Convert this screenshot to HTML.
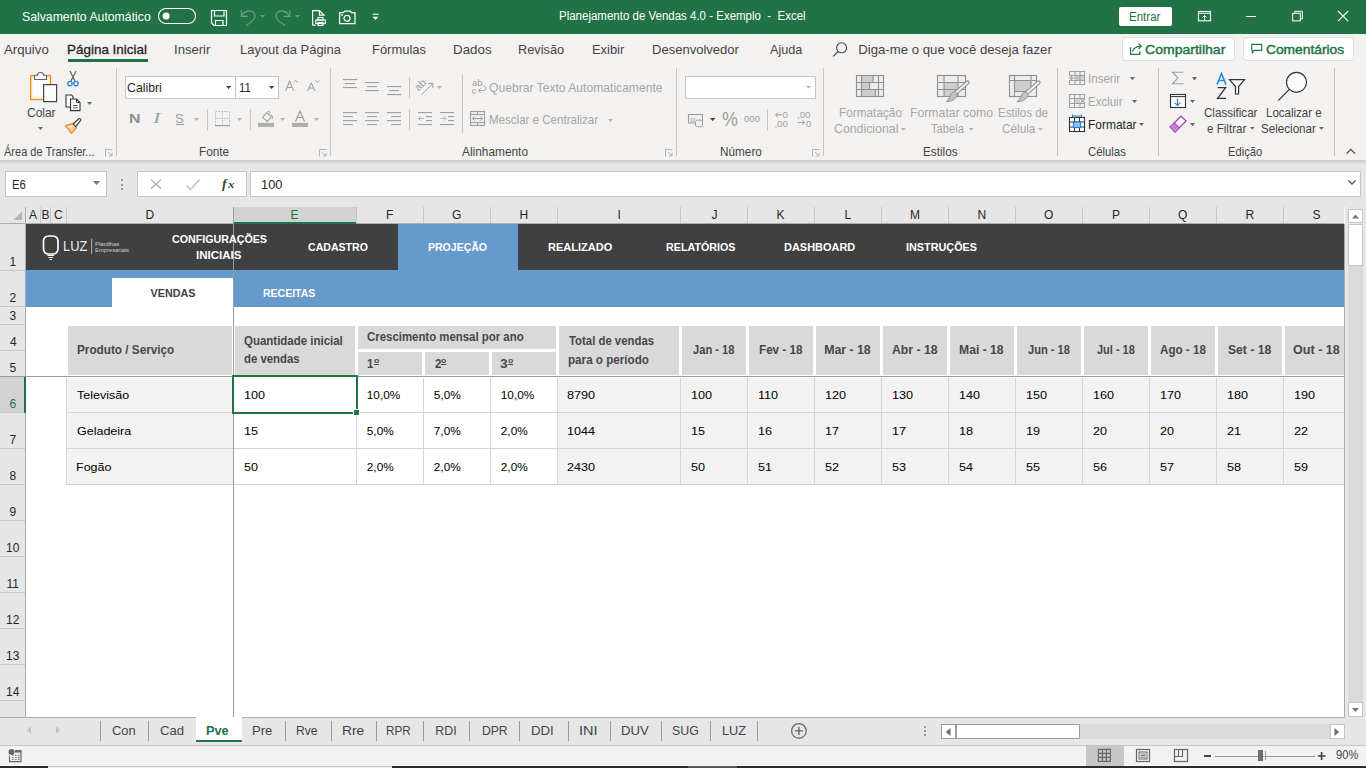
<!DOCTYPE html>
<html><head><meta charset="utf-8"><title>Excel</title><style>
*{margin:0;padding:0;box-sizing:border-box}
html,body{width:1366px;height:768px;overflow:hidden;background:#fff;position:relative}
.a{position:absolute}
.t{white-space:pre;line-height:1;transform-origin:0 0}
</style></head><body>
<div class="a" style="left:0px;top:0px;width:1366px;height:34px;background:#217346;"></div>
<div class="a" style="left:0px;top:34px;width:1366px;height:126px;background:#f3f2f1;"></div>
<div class="a" style="left:0px;top:160px;width:1366px;height:5px;background:linear-gradient(#cbc9c7,#e3e3e3 75%,#e6e6e6);"></div>
<div class="a" style="left:0px;top:165px;width:1366px;height:42px;background:#e6e6e6;"></div>
<div class="a" style="left:0px;top:207px;width:1344px;height:17px;background:#e6e6e6;"></div>
<div class="a" style="left:26px;top:224px;width:1318px;height:493px;background:#fff;"></div>
<div class="a" style="left:0px;top:224px;width:25px;height:493px;background:#e6e6e6;"></div>
<div class="a" style="left:25px;top:207px;width:1px;height:510px;background:#ababab;"></div>
<div class="a" style="left:0px;top:223px;width:1344px;height:1px;background:#ababab;"></div>
<div class="a" style="left:1344px;top:224px;width:1px;height:494px;background:#ababab;"></div>
<div class="a" style="left:0px;top:717px;width:1345px;height:1px;background:#ababab;"></div>
<div class="a" style="left:1345px;top:207px;width:21px;height:511px;background:#e6e6e6;"></div>
<div class="a" style="left:0px;top:718px;width:1366px;height:27px;background:#e6e6e6;"></div>
<div class="a" style="left:0px;top:745px;width:1366px;height:1px;background:#c8c6c4;"></div>
<div class="a" style="left:0px;top:746px;width:1366px;height:20px;background:#f3f2f1;"></div>
<div class="a" style="left:0px;top:766px;width:1366px;height:2px;background:#2b2b2b;"></div>
<svg class="a" style="left:13px;top:211px;" width="10" height="10" viewBox="0 0 10 10"><path d="M9,0.5 V9 H0.5 Z" fill="#b4b4b4"/></svg>
<div class="a" style="left:234px;top:207px;width:122px;height:15px;background:#d2d2d2;"></div>
<div class="a" style="left:234px;top:222px;width:122px;height:2px;background:#217346;"></div>
<div class="a" style="left:40px;top:207px;width:1px;height:16px;background:#c6c6c6;"></div>
<div class="a" style="left:50px;top:207px;width:1px;height:16px;background:#c6c6c6;"></div>
<div class="a" style="left:66px;top:207px;width:1px;height:16px;background:#c6c6c6;"></div>
<div class="a" style="left:233px;top:207px;width:1px;height:16px;background:#c6c6c6;"></div>
<div class="a" style="left:356px;top:207px;width:1px;height:16px;background:#c6c6c6;"></div>
<div class="a" style="left:423px;top:207px;width:1px;height:16px;background:#c6c6c6;"></div>
<div class="a" style="left:490px;top:207px;width:1px;height:16px;background:#c6c6c6;"></div>
<div class="a" style="left:557px;top:207px;width:1px;height:16px;background:#c6c6c6;"></div>
<div class="a" style="left:680px;top:207px;width:1px;height:16px;background:#c6c6c6;"></div>
<div class="a" style="left:747px;top:207px;width:1px;height:16px;background:#c6c6c6;"></div>
<div class="a" style="left:814px;top:207px;width:1px;height:16px;background:#c6c6c6;"></div>
<div class="a" style="left:881px;top:207px;width:1px;height:16px;background:#c6c6c6;"></div>
<div class="a" style="left:948px;top:207px;width:1px;height:16px;background:#c6c6c6;"></div>
<div class="a" style="left:1015px;top:207px;width:1px;height:16px;background:#c6c6c6;"></div>
<div class="a" style="left:1082px;top:207px;width:1px;height:16px;background:#c6c6c6;"></div>
<div class="a" style="left:1149px;top:207px;width:1px;height:16px;background:#c6c6c6;"></div>
<div class="a" style="left:1216px;top:207px;width:1px;height:16px;background:#c6c6c6;"></div>
<div class="a" style="left:1283px;top:207px;width:1px;height:16px;background:#c6c6c6;"></div>
<div class="a" style="left:0px;top:270px;width:25px;height:1px;background:#c6c6c6;"></div>
<div class="a" style="left:0px;top:306px;width:25px;height:1px;background:#c6c6c6;"></div>
<div class="a" style="left:0px;top:324px;width:25px;height:1px;background:#c6c6c6;"></div>
<div class="a" style="left:0px;top:350px;width:25px;height:1px;background:#c6c6c6;"></div>
<div class="a" style="left:0px;top:376px;width:25px;height:1px;background:#c6c6c6;"></div>
<div class="a" style="left:0px;top:412px;width:25px;height:1px;background:#c6c6c6;"></div>
<div class="a" style="left:0px;top:448px;width:25px;height:1px;background:#c6c6c6;"></div>
<div class="a" style="left:0px;top:484px;width:25px;height:1px;background:#c6c6c6;"></div>
<div class="a" style="left:0px;top:520px;width:25px;height:1px;background:#c6c6c6;"></div>
<div class="a" style="left:0px;top:556px;width:25px;height:1px;background:#c6c6c6;"></div>
<div class="a" style="left:0px;top:592px;width:25px;height:1px;background:#c6c6c6;"></div>
<div class="a" style="left:0px;top:628px;width:25px;height:1px;background:#c6c6c6;"></div>
<div class="a" style="left:0px;top:664px;width:25px;height:1px;background:#c6c6c6;"></div>
<div class="a" style="left:0px;top:700px;width:25px;height:1px;background:#c6c6c6;"></div>
<div class="a" style="left:0px;top:377px;width:24px;height:35px;background:#d2d2d2;"></div>
<div class="a" style="left:24px;top:376px;width:2px;height:37px;background:#217346;"></div>
<div class="a" style="left:26px;top:224px;width:372px;height:46px;background:#404040;"></div>
<div class="a" style="left:398px;top:224px;width:120px;height:46px;background:#6699cc;"></div>
<div class="a" style="left:518px;top:224px;width:826px;height:46px;background:#404040;"></div>
<div class="a" style="left:26px;top:270px;width:1318px;height:37px;background:#6699cc;"></div>
<div class="a" style="left:112px;top:278px;width:121px;height:29px;background:#fff;"></div>
<div class="a" style="left:68px;top:326px;width:164px;height:49px;background:#d9d9d9;"></div>
<div class="a" style="left:235px;top:326px;width:120px;height:49px;background:#d9d9d9;"></div>
<div class="a" style="left:358px;top:326px;width:198px;height:23px;background:#d9d9d9;"></div>
<div class="a" style="left:358px;top:352px;width:64px;height:23px;background:#d9d9d9;"></div>
<div class="a" style="left:425px;top:352px;width:64px;height:23px;background:#d9d9d9;"></div>
<div class="a" style="left:492px;top:352px;width:64px;height:23px;background:#d9d9d9;"></div>
<div class="a" style="left:559px;top:326px;width:120px;height:49px;background:#d9d9d9;"></div>
<div class="a" style="left:682px;top:326px;width:64px;height:49px;background:#d9d9d9;"></div>
<div class="a" style="left:749px;top:326px;width:64px;height:49px;background:#d9d9d9;"></div>
<div class="a" style="left:816px;top:326px;width:64px;height:49px;background:#d9d9d9;"></div>
<div class="a" style="left:883px;top:326px;width:64px;height:49px;background:#d9d9d9;"></div>
<div class="a" style="left:950px;top:326px;width:64px;height:49px;background:#d9d9d9;"></div>
<div class="a" style="left:1017px;top:326px;width:64px;height:49px;background:#d9d9d9;"></div>
<div class="a" style="left:1084px;top:326px;width:64px;height:49px;background:#d9d9d9;"></div>
<div class="a" style="left:1151px;top:326px;width:64px;height:49px;background:#d9d9d9;"></div>
<div class="a" style="left:1218px;top:326px;width:64px;height:49px;background:#d9d9d9;"></div>
<div class="a" style="left:1285px;top:326px;width:59px;height:49px;background:#d9d9d9;"></div>
<div class="a" style="left:66px;top:378px;width:167px;height:107px;background:#f2f2f2;"></div>
<div class="a" style="left:557px;top:378px;width:787px;height:107px;background:#f2f2f2;"></div>
<div class="a" style="left:66px;top:412px;width:1278px;height:1px;background:#d4d4d4;"></div>
<div class="a" style="left:66px;top:448px;width:1278px;height:1px;background:#d4d4d4;"></div>
<div class="a" style="left:66px;top:484px;width:1278px;height:1px;background:#d4d4d4;"></div>
<div class="a" style="left:66px;top:378px;width:1px;height:107px;background:#d4d4d4;"></div>
<div class="a" style="left:356px;top:378px;width:1px;height:106px;background:#d4d4d4;"></div>
<div class="a" style="left:423px;top:378px;width:1px;height:106px;background:#d4d4d4;"></div>
<div class="a" style="left:490px;top:378px;width:1px;height:106px;background:#d4d4d4;"></div>
<div class="a" style="left:557px;top:378px;width:1px;height:106px;background:#d4d4d4;"></div>
<div class="a" style="left:680px;top:378px;width:1px;height:106px;background:#d4d4d4;"></div>
<div class="a" style="left:747px;top:378px;width:1px;height:106px;background:#d4d4d4;"></div>
<div class="a" style="left:814px;top:378px;width:1px;height:106px;background:#d4d4d4;"></div>
<div class="a" style="left:881px;top:378px;width:1px;height:106px;background:#d4d4d4;"></div>
<div class="a" style="left:948px;top:378px;width:1px;height:106px;background:#d4d4d4;"></div>
<div class="a" style="left:1015px;top:378px;width:1px;height:106px;background:#d4d4d4;"></div>
<div class="a" style="left:1082px;top:378px;width:1px;height:106px;background:#d4d4d4;"></div>
<div class="a" style="left:1149px;top:378px;width:1px;height:106px;background:#d4d4d4;"></div>
<div class="a" style="left:1216px;top:378px;width:1px;height:106px;background:#d4d4d4;"></div>
<div class="a" style="left:1283px;top:378px;width:1px;height:106px;background:#d4d4d4;"></div>
<div class="a" style="left:233px;top:207px;width:1px;height:510px;background:#9c9c9c;"></div>
<div class="a" style="left:0px;top:376px;width:1344px;height:1px;background:#9c9c9c;"></div>
<div class="a" style="left:232px;top:375px;width:126px;height:2px;background:#217346;"></div>
<div class="a" style="left:232px;top:412px;width:122px;height:2px;background:#217346;"></div>
<div class="a" style="left:232px;top:375px;width:2px;height:39px;background:#217346;"></div>
<div class="a" style="left:356px;top:375px;width:2px;height:35px;background:#217346;"></div>
<div class="a" style="left:354px;top:410px;width:5px;height:5px;background:#217346;box-shadow:0 0 0 1px #fff;"></div>
<div class="a t" style="left:29.00px;top:209.00px;font-family:'Liberation Sans';font-size:12px;font-weight:400;color:#262626;">A</div>
<div class="a t" style="left:41.50px;top:209.00px;font-family:'Liberation Sans';font-size:12px;font-weight:400;color:#262626;">B</div>
<div class="a t" style="left:54.00px;top:209.00px;font-family:'Liberation Sans';font-size:12px;font-weight:400;color:#262626;">C</div>
<div class="a t" style="left:145.50px;top:209.00px;font-family:'Liberation Sans';font-size:12px;font-weight:400;color:#262626;">D</div>
<div class="a t" style="left:290.50px;top:209.00px;font-family:'Liberation Sans';font-size:12px;font-weight:400;color:#217346;">E</div>
<div class="a t" style="left:386.00px;top:209.00px;font-family:'Liberation Sans';font-size:12px;font-weight:400;color:#262626;">F</div>
<div class="a t" style="left:452.00px;top:209.00px;font-family:'Liberation Sans';font-size:12px;font-weight:400;color:#262626;">G</div>
<div class="a t" style="left:519.50px;top:209.00px;font-family:'Liberation Sans';font-size:12px;font-weight:400;color:#262626;">H</div>
<div class="a t" style="left:617.50px;top:209.00px;font-family:'Liberation Sans';font-size:12px;font-weight:400;color:#262626;">I</div>
<div class="a t" style="left:711.50px;top:209.00px;font-family:'Liberation Sans';font-size:12px;font-weight:400;color:#262626;">J</div>
<div class="a t" style="left:776.50px;top:209.00px;font-family:'Liberation Sans';font-size:12px;font-weight:400;color:#262626;">K</div>
<div class="a t" style="left:844.50px;top:209.00px;font-family:'Liberation Sans';font-size:12px;font-weight:400;color:#262626;">L</div>
<div class="a t" style="left:910.00px;top:209.00px;font-family:'Liberation Sans';font-size:12px;font-weight:400;color:#262626;">M</div>
<div class="a t" style="left:977.50px;top:209.00px;font-family:'Liberation Sans';font-size:12px;font-weight:400;color:#262626;">N</div>
<div class="a t" style="left:1044.00px;top:209.00px;font-family:'Liberation Sans';font-size:12px;font-weight:400;color:#262626;">O</div>
<div class="a t" style="left:1112.00px;top:209.00px;font-family:'Liberation Sans';font-size:12px;font-weight:400;color:#262626;">P</div>
<div class="a t" style="left:1178.00px;top:209.00px;font-family:'Liberation Sans';font-size:12px;font-weight:400;color:#262626;">Q</div>
<div class="a t" style="left:1245.50px;top:209.00px;font-family:'Liberation Sans';font-size:12px;font-weight:400;color:#262626;">R</div>
<div class="a t" style="left:1312.50px;top:209.00px;font-family:'Liberation Sans';font-size:12px;font-weight:400;color:#262626;">S</div>
<div class="a t" style="left:9.50px;top:256.00px;font-family:'Liberation Sans';font-size:12px;font-weight:400;color:#262626;">1</div>
<div class="a t" style="left:9.50px;top:292.00px;font-family:'Liberation Sans';font-size:12px;font-weight:400;color:#262626;">2</div>
<div class="a t" style="left:9.50px;top:310.00px;font-family:'Liberation Sans';font-size:12px;font-weight:400;color:#262626;">3</div>
<div class="a t" style="left:10.00px;top:336.00px;font-family:'Liberation Sans';font-size:12px;font-weight:400;color:#262626;">4</div>
<div class="a t" style="left:9.50px;top:362.00px;font-family:'Liberation Sans';font-size:12px;font-weight:400;color:#262626;">5</div>
<div class="a t" style="left:9.50px;top:398.00px;font-family:'Liberation Sans';font-size:12px;font-weight:400;color:#217346;">6</div>
<div class="a t" style="left:9.50px;top:434.00px;font-family:'Liberation Sans';font-size:12px;font-weight:400;color:#262626;">7</div>
<div class="a t" style="left:9.50px;top:470.00px;font-family:'Liberation Sans';font-size:12px;font-weight:400;color:#262626;">8</div>
<div class="a t" style="left:9.50px;top:506.00px;font-family:'Liberation Sans';font-size:12px;font-weight:400;color:#262626;">9</div>
<div class="a t" style="left:6.00px;top:542.00px;font-family:'Liberation Sans';font-size:12px;font-weight:400;color:#262626;">10</div>
<div class="a t" style="left:6.50px;top:578.00px;font-family:'Liberation Sans';font-size:12px;font-weight:400;color:#262626;">11</div>
<div class="a t" style="left:6.00px;top:614.00px;font-family:'Liberation Sans';font-size:12px;font-weight:400;color:#262626;">12</div>
<div class="a t" style="left:6.00px;top:650.00px;font-family:'Liberation Sans';font-size:12px;font-weight:400;color:#262626;">13</div>
<div class="a t" style="left:6.00px;top:686.00px;font-family:'Liberation Sans';font-size:12px;font-weight:400;color:#262626;">14</div>
<div class="a t" style="left:172.00px;top:234.00px;font-family:'Liberation Sans';font-size:10.8px;font-weight:700;color:#fff;transform:scaleX(0.9896);">CONFIGURAÇÕES</div>
<div class="a t" style="left:196.43px;top:250.00px;font-family:'Liberation Sans';font-size:10.8px;font-weight:700;color:#fff;transform:scaleX(1.0671);">INICIAIS</div>
<div class="a t" style="left:307.50px;top:242.00px;font-family:'Liberation Sans';font-size:10.8px;font-weight:700;color:#fff;transform:scaleX(0.9795);">CADASTRO</div>
<div class="a t" style="left:428.28px;top:242.00px;font-family:'Liberation Sans';font-size:10.8px;font-weight:700;color:#fff;transform:scaleX(0.9746);">PROJEÇÃO</div>
<div class="a t" style="left:548.48px;top:242.00px;font-family:'Liberation Sans';font-size:10.8px;font-weight:700;color:#fff;transform:scaleX(1.0205);">REALIZADO</div>
<div class="a t" style="left:666.01px;top:242.00px;font-family:'Liberation Sans';font-size:10.8px;font-weight:700;color:#fff;transform:scaleX(0.9928);">RELATÓRIOS</div>
<div class="a t" style="left:783.99px;top:242.00px;font-family:'Liberation Sans';font-size:10.8px;font-weight:700;color:#fff;transform:scaleX(1.0145);">DASHBOARD</div>
<div class="a t" style="left:906.00px;top:242.00px;font-family:'Liberation Sans';font-size:10.8px;font-weight:700;color:#fff;transform:scaleX(1.0036);">INSTRUÇÕES</div>
<div class="a t" style="left:150.50px;top:288.00px;font-family:'Liberation Sans';font-size:10.8px;font-weight:700;color:#404040;">VENDAS</div>
<div class="a t" style="left:263.28px;top:288.00px;font-family:'Liberation Sans';font-size:10.8px;font-weight:700;color:#fff;transform:scaleX(0.9712);">RECEITAS</div>
<div class="a t" style="left:76.80px;top:344.00px;font-family:'Liberation Sans';font-size:12.3px;font-weight:700;color:#474747;transform:scaleX(0.9550);">Produto / Serviço</div>
<div class="a t" style="left:244.07px;top:335.00px;font-family:'Liberation Sans';font-size:12.3px;font-weight:700;color:#474747;transform:scaleX(0.9327);">Quantidade inicial</div>
<div class="a t" style="left:244.27px;top:353.00px;font-family:'Liberation Sans';font-size:12.3px;font-weight:700;color:#474747;transform:scaleX(0.9254);">de vendas</div>
<div class="a t" style="left:366.57px;top:331.00px;font-family:'Liberation Sans';font-size:12.3px;font-weight:700;color:#474747;transform:scaleX(0.9281);">Crescimento mensal por ano</div>
<div class="a t" style="left:366.57px;top:358.00px;font-family:'Liberation Sans';font-size:12.3px;font-weight:700;color:#474747;transform:scaleX(0.9333);">1</div>
<div class="a t" style="left:374.30px;top:357.00px;font-family:'Liberation Sans';font-size:7.5px;font-weight:700;color:#474747;transform:scaleX(1.1500);">o</div>
<div class="a" style="left:374.3px;top:364.2px;width:4.8px;height:1.2px;background:#474747;"></div>
<div class="a t" style="left:434.50px;top:358.00px;font-family:'Liberation Sans';font-size:12.3px;font-weight:700;color:#474747;transform:scaleX(0.9333);">2</div>
<div class="a t" style="left:441.30px;top:357.00px;font-family:'Liberation Sans';font-size:7.5px;font-weight:700;color:#474747;transform:scaleX(1.1500);">o</div>
<div class="a" style="left:441.3px;top:364.2px;width:4.8px;height:1.2px;background:#474747;"></div>
<div class="a t" style="left:500.38px;top:358.00px;font-family:'Liberation Sans';font-size:12.3px;font-weight:700;color:#474747;transform:scaleX(1.1200);">3</div>
<div class="a t" style="left:508.30px;top:357.00px;font-family:'Liberation Sans';font-size:7.5px;font-weight:700;color:#474747;transform:scaleX(1.1500);">o</div>
<div class="a" style="left:508.3px;top:364.2px;width:4.8px;height:1.2px;background:#474747;"></div>
<div class="a t" style="left:568.60px;top:335.00px;font-family:'Liberation Sans';font-size:12.3px;font-weight:700;color:#474747;transform:scaleX(0.9239);">Total de vendas</div>
<div class="a t" style="left:567.65px;top:354.00px;font-family:'Liberation Sans';font-size:12.3px;font-weight:700;color:#474747;transform:scaleX(0.9476);">para o período</div>
<div class="a t" style="left:693.33px;top:344.00px;font-family:'Liberation Sans';font-size:12.3px;font-weight:700;color:#474747;transform:scaleX(0.9056);">Jan - 18</div>
<div class="a t" style="left:758.88px;top:344.00px;font-family:'Liberation Sans';font-size:12.3px;font-weight:700;color:#474747;transform:scaleX(0.9489);">Fev - 18</div>
<div class="a t" style="left:824.20px;top:344.00px;font-family:'Liberation Sans';font-size:12.3px;font-weight:700;color:#474747;">Mar - 18</div>
<div class="a t" style="left:891.83px;top:344.00px;font-family:'Liberation Sans';font-size:12.3px;font-weight:700;color:#474747;transform:scaleX(0.9943);">Abr - 18</div>
<div class="a t" style="left:958.96px;top:344.00px;font-family:'Liberation Sans';font-size:12.3px;font-weight:700;color:#474747;transform:scaleX(0.9886);">Mai - 18</div>
<div class="a t" style="left:1027.95px;top:344.00px;font-family:'Liberation Sans';font-size:12.3px;font-weight:700;color:#474747;transform:scaleX(0.9022);">Jun - 18</div>
<div class="a t" style="left:1096.95px;top:344.00px;font-family:'Liberation Sans';font-size:12.3px;font-weight:700;color:#474747;transform:scaleX(0.8929);">Jul - 18</div>
<div class="a t" style="left:1159.50px;top:344.00px;font-family:'Liberation Sans';font-size:12.3px;font-weight:700;color:#474747;transform:scaleX(0.9468);">Ago - 18</div>
<div class="a t" style="left:1227.96px;top:344.00px;font-family:'Liberation Sans';font-size:12.3px;font-weight:700;color:#474747;transform:scaleX(0.9881);">Set - 18</div>
<div class="a t" style="left:1293.18px;top:344.00px;font-family:'Liberation Sans';font-size:12.3px;font-weight:700;color:#474747;transform:scaleX(1.0227);">Out - 18</div>
<div class="a t" style="left:77.00px;top:390.00px;font-family:'Liberation Sans';font-size:11.8px;font-weight:400;color:#000;transform:scaleX(1.0600);">Televisão</div>
<div class="a t" style="left:243.93px;top:390.00px;font-family:'Liberation Sans';font-size:11.8px;font-weight:400;color:#000;transform:scaleX(1.0700);">100</div>
<div class="a t" style="left:366.80px;top:390.00px;font-family:'Liberation Sans';font-size:11.8px;font-weight:400;color:#000;">10,0%</div>
<div class="a t" style="left:433.80px;top:390.00px;font-family:'Liberation Sans';font-size:11.8px;font-weight:400;color:#000;">5,0%</div>
<div class="a t" style="left:500.80px;top:390.00px;font-family:'Liberation Sans';font-size:11.8px;font-weight:400;color:#000;">10,0%</div>
<div class="a t" style="left:567.33px;top:390.00px;font-family:'Liberation Sans';font-size:11.8px;font-weight:400;color:#000;transform:scaleX(1.0700);">8790</div>
<div class="a t" style="left:690.73px;top:390.00px;font-family:'Liberation Sans';font-size:11.8px;font-weight:400;color:#000;transform:scaleX(1.0700);">100</div>
<div class="a t" style="left:757.73px;top:390.00px;font-family:'Liberation Sans';font-size:11.8px;font-weight:400;color:#000;transform:scaleX(1.0700);">110</div>
<div class="a t" style="left:824.73px;top:390.00px;font-family:'Liberation Sans';font-size:11.8px;font-weight:400;color:#000;transform:scaleX(1.0700);">120</div>
<div class="a t" style="left:891.73px;top:390.00px;font-family:'Liberation Sans';font-size:11.8px;font-weight:400;color:#000;transform:scaleX(1.0700);">130</div>
<div class="a t" style="left:958.73px;top:390.00px;font-family:'Liberation Sans';font-size:11.8px;font-weight:400;color:#000;transform:scaleX(1.0700);">140</div>
<div class="a t" style="left:1025.73px;top:390.00px;font-family:'Liberation Sans';font-size:11.8px;font-weight:400;color:#000;transform:scaleX(1.0700);">150</div>
<div class="a t" style="left:1092.73px;top:390.00px;font-family:'Liberation Sans';font-size:11.8px;font-weight:400;color:#000;transform:scaleX(1.0700);">160</div>
<div class="a t" style="left:1159.73px;top:390.00px;font-family:'Liberation Sans';font-size:11.8px;font-weight:400;color:#000;transform:scaleX(1.0700);">170</div>
<div class="a t" style="left:1226.73px;top:390.00px;font-family:'Liberation Sans';font-size:11.8px;font-weight:400;color:#000;transform:scaleX(1.0700);">180</div>
<div class="a t" style="left:1293.73px;top:390.00px;font-family:'Liberation Sans';font-size:11.8px;font-weight:400;color:#000;transform:scaleX(1.0700);">190</div>
<div class="a t" style="left:76.74px;top:426.00px;font-family:'Liberation Sans';font-size:11.8px;font-weight:400;color:#000;transform:scaleX(1.0600);">Geladeira</div>
<div class="a t" style="left:243.93px;top:426.00px;font-family:'Liberation Sans';font-size:11.8px;font-weight:400;color:#000;transform:scaleX(1.0700);">15</div>
<div class="a t" style="left:366.80px;top:426.00px;font-family:'Liberation Sans';font-size:11.8px;font-weight:400;color:#000;">5,0%</div>
<div class="a t" style="left:433.80px;top:426.00px;font-family:'Liberation Sans';font-size:11.8px;font-weight:400;color:#000;">7,0%</div>
<div class="a t" style="left:500.80px;top:426.00px;font-family:'Liberation Sans';font-size:11.8px;font-weight:400;color:#000;">2,0%</div>
<div class="a t" style="left:567.33px;top:426.00px;font-family:'Liberation Sans';font-size:11.8px;font-weight:400;color:#000;transform:scaleX(1.0700);">1044</div>
<div class="a t" style="left:690.73px;top:426.00px;font-family:'Liberation Sans';font-size:11.8px;font-weight:400;color:#000;transform:scaleX(1.0700);">15</div>
<div class="a t" style="left:757.73px;top:426.00px;font-family:'Liberation Sans';font-size:11.8px;font-weight:400;color:#000;transform:scaleX(1.0700);">16</div>
<div class="a t" style="left:824.73px;top:426.00px;font-family:'Liberation Sans';font-size:11.8px;font-weight:400;color:#000;transform:scaleX(1.0700);">17</div>
<div class="a t" style="left:891.73px;top:426.00px;font-family:'Liberation Sans';font-size:11.8px;font-weight:400;color:#000;transform:scaleX(1.0700);">17</div>
<div class="a t" style="left:958.73px;top:426.00px;font-family:'Liberation Sans';font-size:11.8px;font-weight:400;color:#000;transform:scaleX(1.0700);">18</div>
<div class="a t" style="left:1025.73px;top:426.00px;font-family:'Liberation Sans';font-size:11.8px;font-weight:400;color:#000;transform:scaleX(1.0700);">19</div>
<div class="a t" style="left:1092.73px;top:426.00px;font-family:'Liberation Sans';font-size:11.8px;font-weight:400;color:#000;transform:scaleX(1.0700);">20</div>
<div class="a t" style="left:1159.73px;top:426.00px;font-family:'Liberation Sans';font-size:11.8px;font-weight:400;color:#000;transform:scaleX(1.0700);">20</div>
<div class="a t" style="left:1226.73px;top:426.00px;font-family:'Liberation Sans';font-size:11.8px;font-weight:400;color:#000;transform:scaleX(1.0700);">21</div>
<div class="a t" style="left:1293.73px;top:426.00px;font-family:'Liberation Sans';font-size:11.8px;font-weight:400;color:#000;transform:scaleX(1.0700);">22</div>
<div class="a t" style="left:75.94px;top:462.00px;font-family:'Liberation Sans';font-size:11.8px;font-weight:400;color:#000;transform:scaleX(1.0600);">Fogão</div>
<div class="a t" style="left:243.93px;top:462.00px;font-family:'Liberation Sans';font-size:11.8px;font-weight:400;color:#000;transform:scaleX(1.0700);">50</div>
<div class="a t" style="left:366.80px;top:462.00px;font-family:'Liberation Sans';font-size:11.8px;font-weight:400;color:#000;">2,0%</div>
<div class="a t" style="left:433.80px;top:462.00px;font-family:'Liberation Sans';font-size:11.8px;font-weight:400;color:#000;">2,0%</div>
<div class="a t" style="left:500.80px;top:462.00px;font-family:'Liberation Sans';font-size:11.8px;font-weight:400;color:#000;">2,0%</div>
<div class="a t" style="left:567.33px;top:462.00px;font-family:'Liberation Sans';font-size:11.8px;font-weight:400;color:#000;transform:scaleX(1.0700);">2430</div>
<div class="a t" style="left:690.73px;top:462.00px;font-family:'Liberation Sans';font-size:11.8px;font-weight:400;color:#000;transform:scaleX(1.0700);">50</div>
<div class="a t" style="left:757.73px;top:462.00px;font-family:'Liberation Sans';font-size:11.8px;font-weight:400;color:#000;transform:scaleX(1.0700);">51</div>
<div class="a t" style="left:824.73px;top:462.00px;font-family:'Liberation Sans';font-size:11.8px;font-weight:400;color:#000;transform:scaleX(1.0700);">52</div>
<div class="a t" style="left:891.73px;top:462.00px;font-family:'Liberation Sans';font-size:11.8px;font-weight:400;color:#000;transform:scaleX(1.0700);">53</div>
<div class="a t" style="left:958.73px;top:462.00px;font-family:'Liberation Sans';font-size:11.8px;font-weight:400;color:#000;transform:scaleX(1.0700);">54</div>
<div class="a t" style="left:1025.73px;top:462.00px;font-family:'Liberation Sans';font-size:11.8px;font-weight:400;color:#000;transform:scaleX(1.0700);">55</div>
<div class="a t" style="left:1092.73px;top:462.00px;font-family:'Liberation Sans';font-size:11.8px;font-weight:400;color:#000;transform:scaleX(1.0700);">56</div>
<div class="a t" style="left:1159.73px;top:462.00px;font-family:'Liberation Sans';font-size:11.8px;font-weight:400;color:#000;transform:scaleX(1.0700);">57</div>
<div class="a t" style="left:1226.73px;top:462.00px;font-family:'Liberation Sans';font-size:11.8px;font-weight:400;color:#000;transform:scaleX(1.0700);">58</div>
<div class="a t" style="left:1293.73px;top:462.00px;font-family:'Liberation Sans';font-size:11.8px;font-weight:400;color:#000;transform:scaleX(1.0700);">59</div>
<svg class="a" style="left:38px;top:230px;" width="100" height="34" viewBox="0 0 100 34">
<rect x="5.5" y="6" width="14.5" height="18" rx="5" ry="5" fill="none" stroke="#fff" stroke-width="1.7"/>
<path d="M9.5,25.5 L16,25.5 M10.5,27.5 L15,27.5 M11.5,29.5 L14,29.5" stroke="#fff" stroke-width="1.2" fill="none"/>
<rect x="53.2" y="8.6" width="1" height="15" fill="#bdbdbd"/>
</svg>
<div class="a t" style="left:62.82px;top:239.00px;font-family:'Liberation Sans';font-size:14.5px;font-weight:400;color:#ececec;transform:scaleX(0.8846);">LUZ</div>
<div class="a t" style="left:94.90px;top:241.00px;font-family:'Liberation Sans';font-size:6px;font-weight:400;color:#d0d0d0;transform:scaleX(0.9955);">Planilhas</div>
<div class="a t" style="left:94.93px;top:247.00px;font-family:'Liberation Sans';font-size:6px;font-weight:400;color:#d0d0d0;transform:scaleX(0.9697);">Empresariais</div>
<div class="a t" style="left:21.98px;top:11.00px;font-family:'Liberation Sans';font-size:12px;font-weight:400;color:#fff;transform:scaleX(1.0208);">Salvamento Automático</div>
<svg class="a" style="left:157px;top:7px;" width="40" height="18" viewBox="0 0 40 18"><rect x="1.5" y="1.5" width="37" height="15" rx="7.5" fill="none" stroke="#fff" stroke-width="1.1"/><circle cx="9.1" cy="9.1" r="3.5" fill="#fff"/></svg>
<svg class="a" style="left:210px;top:9px;" width="18" height="18" viewBox="0 0 18 18"><path d="M1.5,1.5 H16.5 V16.5 H4 L1.5,14 Z" fill="none" stroke="#fff" stroke-width="1.2"/><path d="M4.5,1.5 V7 H14 V1.5" fill="none" stroke="#fff" stroke-width="1.2"/><path d="M5.5,16.5 V11.5 H13 V16.5" fill="none" stroke="#fff" stroke-width="1.2"/></svg>
<svg class="a" style="left:238px;top:8px;" width="30" height="20" viewBox="0 0 30 20"><path d="M3.3,2.2 V8.4 H9.7" fill="none" stroke="#6aa184" stroke-width="1.1"/><path d="M3.6,8.2 C6,3 13,1 16,5 C18.5,8.5 16.5,12 8,17.8" fill="none" stroke="#6aa184" stroke-width="1.1"/><path d="M22,7 H27 L24.5,10 Z" fill="#6aa184"/></svg>
<svg class="a" style="left:274px;top:8px;" width="30" height="20" viewBox="0 0 30 20"><path d="M15.8,2.2 V8.4 H9.4" fill="none" stroke="#6aa184" stroke-width="1.1"/><path d="M15.5,8.2 C13,3 6,1 3,5 C0.5,8.5 2.5,12 11,17.8" fill="none" stroke="#6aa184" stroke-width="1.1"/><path d="M21,7 H26 L23.5,10 Z" fill="#6aa184"/></svg>
<svg class="a" style="left:311px;top:9px;" width="17" height="18" viewBox="0 0 17 18"><path d="M1.6,16.2 V1.6 H8.5 L13,6.2 H8.5 V1.6" fill="none" stroke="#fff" stroke-width="1.2"/><path d="M1.6,16.2 H4.5" stroke="#fff" stroke-width="1.2"/><rect x="7" y="8.5" width="5" height="2.6" fill="none" stroke="#fff" stroke-width="1.1"/><rect x="4.8" y="11" width="9.5" height="3.6" fill="none" stroke="#fff" stroke-width="1.1"/><rect x="7" y="13.5" width="5" height="3" fill="none" stroke="#fff" stroke-width="1.1"/></svg>
<svg class="a" style="left:338px;top:10px;" width="19" height="16" viewBox="0 0 19 16"><path d="M1.6,2.6 H5.5 L6.5,1.2 H12.5 L13.5,2.6 H17 V13.6 H1.6 Z" fill="none" stroke="#fff" stroke-width="1.2"/><circle cx="9" cy="8.3" r="3" fill="none" stroke="#fff" stroke-width="1.2"/><rect x="3.2" y="4.2" width="1.6" height="1.6" fill="#fff"/></svg>
<svg class="a" style="left:371px;top:12px;" width="9" height="10" viewBox="0 0 9 10"><path d="M1.5,2.2 H7.5" stroke="#fff" stroke-width="1.1"/><path d="M1.5,4.8 H7.5 L4.5,8 Z" fill="#fff"/></svg>
<div class="a t" style="left:559.04px;top:10.00px;font-family:'Liberation Sans';font-size:12px;font-weight:400;color:#fff;transform:scaleX(0.9580);">Planejamento de Vendas 4.0 - Exemplo  -  Excel</div>
<div class="a" style="left:1119px;top:7px;width:53px;height:19px;background:#fff;border-radius:2px;"></div>
<div class="a t" style="left:1129.04px;top:11.00px;font-family:'Liberation Sans';font-size:12px;font-weight:400;color:#217346;transform:scaleX(0.9609);">Entrar</div>
<svg class="a" style="left:1196px;top:9px;" width="17" height="14" viewBox="0 0 17 14"><rect x="2.5" y="2.5" width="12" height="9.3" fill="none" stroke="#fff" stroke-width="1.1"/><path d="M2.5,4.3 H14.5" stroke="#fff" stroke-width="1"/><path d="M8.5,11.5 V6.6 M6.6,8.4 L8.5,6.5 L10.4,8.4" fill="none" stroke="#fff" stroke-width="1"/></svg>
<div class="a" style="left:1246px;top:16px;width:10px;height:1px;background:#fff;"></div>
<svg class="a" style="left:1290px;top:9px;" width="14" height="14" viewBox="0 0 14 14"><rect x="2.7" y="4.3" width="7.6" height="7.6" fill="none" stroke="#fff" stroke-width="1"/><path d="M4.7,4.3 V2.3 H12.3 V9.9 H10.3" fill="none" stroke="#fff" stroke-width="1"/></svg>
<svg class="a" style="left:1336px;top:9px;" width="14" height="14" viewBox="0 0 14 14"><path d="M2,2 L12.2,12.2 M12.2,2 L2,12.2" stroke="#fff" stroke-width="1.1"/></svg>
<div class="a t" style="left:4.00px;top:43.00px;font-family:'Liberation Sans';font-size:13.2px;font-weight:400;color:#444444;">Arquivo</div>
<div class="a t" style="left:67.48px;top:43.00px;font-family:'Liberation Sans';font-size:13.2px;font-weight:400;color:#262626;transform:scaleX(1.0195);-webkit-text-stroke:0.3px #262626;">Página Inicial</div>
<div class="a" style="left:68px;top:59px;width:80px;height:3px;background:#217346;"></div>
<div class="a t" style="left:174.01px;top:43.00px;font-family:'Liberation Sans';font-size:13.2px;font-weight:400;color:#444444;transform:scaleX(0.9931);">Inserir</div>
<div class="a t" style="left:240.27px;top:43.00px;font-family:'Liberation Sans';font-size:13.2px;font-weight:400;color:#444444;transform:scaleX(0.9827);">Layout da Página</div>
<div class="a t" style="left:371.52px;top:43.00px;font-family:'Liberation Sans';font-size:13.2px;font-weight:400;color:#444444;transform:scaleX(0.9811);">Fórmulas</div>
<div class="a t" style="left:453.24px;top:43.00px;font-family:'Liberation Sans';font-size:13.2px;font-weight:400;color:#444444;transform:scaleX(1.0135);">Dados</div>
<div class="a t" style="left:518.28px;top:43.00px;font-family:'Liberation Sans';font-size:13.2px;font-weight:400;color:#444444;transform:scaleX(0.9674);">Revisão</div>
<div class="a t" style="left:591.52px;top:43.00px;font-family:'Liberation Sans';font-size:13.2px;font-weight:400;color:#444444;transform:scaleX(0.9766);">Exibir</div>
<div class="a t" style="left:652.26px;top:43.00px;font-family:'Liberation Sans';font-size:13.2px;font-weight:400;color:#444444;transform:scaleX(0.9885);">Desenvolvedor</div>
<div class="a t" style="left:770.00px;top:43.00px;font-family:'Liberation Sans';font-size:13.2px;font-weight:400;color:#444444;transform:scaleX(0.9559);">Ajuda</div>
<svg class="a" style="left:831px;top:41px;" width="18" height="18" viewBox="0 0 18 18"><circle cx="10.6" cy="6.8" r="5" fill="none" stroke="#444" stroke-width="1.1"/><path d="M7,10.5 L2.2,15.4" stroke="#444" stroke-width="1.2"/></svg>
<div class="a t" style="left:858.25px;top:43.00px;font-family:'Liberation Sans';font-size:13.2px;font-weight:400;color:#444444;">Diga-me o que você deseja fazer</div>
<div class="a" style="left:1122.5px;top:37.5px;width:111.5px;height:22.5px;background:#fff;border-radius:3px;box-shadow:0 0 0 1px #e1dfdd;"></div>
<svg class="a" style="left:1128px;top:42px;" width="16" height="15" viewBox="0 0 16 15"><path d="M2.6,5.2 V12.4 H11.8 V9.2" fill="none" stroke="#217346" stroke-width="1.2"/><path d="M4.6,9.6 C5.5,6 8.5,4.3 12.6,4.3" fill="none" stroke="#217346" stroke-width="1.2"/><path d="M10.6,1.6 L13.2,4.3 L10.6,7" fill="none" stroke="#217346" stroke-width="1.2"/></svg>
<div class="a t" style="left:1144.94px;top:43.00px;font-family:'Liberation Sans';font-size:13.2px;font-weight:400;color:#217346;transform:scaleX(1.0642);-webkit-text-stroke:0.45px #217346;">Compartilhar</div>
<div class="a" style="left:1243.5px;top:37.5px;width:109.5px;height:22.5px;background:#fff;border-radius:3px;box-shadow:0 0 0 1px #e1dfdd;"></div>
<svg class="a" style="left:1249px;top:42px;" width="16" height="14" viewBox="0 0 16 14"><path d="M2.8,2.4 H12.8 V8.4 H5.2 L3.3,10.8 V8.4 H2.8 Z" fill="none" stroke="#217346" stroke-width="1.1"/></svg>
<div class="a t" style="left:1266.21px;top:43.00px;font-family:'Liberation Sans';font-size:13.2px;font-weight:400;color:#217346;transform:scaleX(1.0445);-webkit-text-stroke:0.45px #217346;">Comentários</div>
<div class="a" style="left:116px;top:68px;width:1px;height:88px;background:#c8c6c4;"></div>
<div class="a" style="left:330px;top:68px;width:1px;height:88px;background:#c8c6c4;"></div>
<div class="a" style="left:676px;top:68px;width:1px;height:88px;background:#c8c6c4;"></div>
<div class="a" style="left:823px;top:68px;width:1px;height:88px;background:#c8c6c4;"></div>
<div class="a" style="left:1057px;top:68px;width:1px;height:88px;background:#c8c6c4;"></div>
<div class="a" style="left:1158px;top:68px;width:1px;height:88px;background:#c8c6c4;"></div>
<div class="a" style="left:1334px;top:68px;width:1px;height:88px;background:#c8c6c4;"></div>
<svg class="a" style="left:28px;top:70px;" width="34" height="34" viewBox="0 0 34 34">
<rect x="2.6" y="5.6" width="20" height="24" fill="#fde9b0" stroke="#f08a24" stroke-width="1.2"/>
<rect x="4.5" y="7.5" width="16" height="20" fill="#fbfbfb"/>
<path d="M6.5,9.5 V5.2 H9.5 C9.5,1.6 15.5,1.6 15.5,5.2 H18.5 V9.5 Z" fill="#fbfbfb" stroke="#666" stroke-width="1.1"/>
<rect x="15.6" y="14.6" width="13" height="17" fill="#fbfbfb" stroke="#444" stroke-width="1.2"/>
</svg>
<div class="a t" style="left:26.52px;top:107.00px;font-family:'Liberation Sans';font-size:12.2px;font-weight:400;color:#444444;transform:scaleX(0.9821);">Colar</div>
<svg class="a" style="left:38px;top:127px;" width="5" height="3" viewBox="0 0 5 3"><path d="M0,0 H5 L2.5,3 Z" fill="#666666"/></svg>
<svg class="a" style="left:66px;top:70px;" width="14" height="18" viewBox="0 0 14 18">
<path d="M4,1 L9,11 M10,1 L5,11" stroke="#555" stroke-width="1.1"/>
<circle cx="4" cy="13.6" r="2.2" fill="none" stroke="#2b88d8" stroke-width="1.3"/>
<circle cx="10" cy="13.6" r="2.2" fill="none" stroke="#2b88d8" stroke-width="1.3"/>
</svg>
<svg class="a" style="left:64px;top:94px;" width="18" height="18" viewBox="0 0 18 18">
<path d="M2,1 H7.5 L9,2.5 V13 H2 Z" fill="#fff" stroke="#333" stroke-width="1.1"/>
<path d="M6.5,5 H12.5 L16,8.5 V16.6 H6.5 Z" fill="#fff" stroke="#333" stroke-width="1.1"/>
<path d="M12.5,5 V8.5 H16" fill="none" stroke="#333" stroke-width="1"/>
<path d="M9,11.5 H13.5 M9,13.8 H13.5" stroke="#333" stroke-width="0.9"/>
</svg>
<svg class="a" style="left:87px;top:101.5px;" width="5" height="3" viewBox="0 0 5 3"><path d="M0,0 H5 L2.5,3 Z" fill="#666666"/></svg>
<svg class="a" style="left:64px;top:117px;" width="18" height="18" viewBox="0 0 18 18">
<path d="M1.4,8.6 L9.6,6.2 L12.4,11 L7.6,16.4 Z" fill="#f9c89a" stroke="#f08a24" stroke-width="1.2" stroke-linejoin="round"/>
<path d="M4.2,10.4 L10.4,8.6" stroke="#fff" stroke-width="1"/>
<path d="M9.2,7 L14.8,1.8 C15.8,1 17.4,2.4 16.6,3.4 L11.8,9.6 Z" fill="#fafafa" stroke="#444" stroke-width="1.2" stroke-linejoin="round"/>
</svg>
<div class="a t" style="left:4.40px;top:146.00px;font-family:'Liberation Sans';font-size:12.2px;font-weight:400;color:#444444;transform:scaleX(0.9030);">Área de Transfer...</div>
<svg class="a" style="left:104.5px;top:148.5px;" width="8" height="8" viewBox="0 0 8 8"><path d="M0.5,7.5 V0.5 H7.5 M3,3 L7,7 M7,4 V7 H4" fill="none" stroke="#b4b4b4" stroke-width="1"/></svg>
<div class="a" style="left:125px;top:76px;width:111px;height:23px;background:#fff;box-shadow:inset 0 0 0 1px #c6c6c6;"></div>
<div class="a" style="left:235px;top:76px;width:44px;height:23px;background:#fff;box-shadow:inset 0 0 0 1px #c6c6c6;"></div>
<div class="a t" style="left:127.42px;top:82.00px;font-family:'Liberation Sans';font-size:12.6px;font-weight:400;color:#262626;transform:scaleX(0.9765);">Calibri</div>
<svg class="a" style="left:226px;top:86.2px;" width="5.2" height="3.1" viewBox="0 0 5.2 3.1"><path d="M0,0 H5.2 L2.6,3.1 Z" fill="#444"/></svg>
<div class="a t" style="left:238.79px;top:82.00px;font-family:'Liberation Sans';font-size:12.6px;font-weight:400;color:#262626;transform:scaleX(0.9091);">11</div>
<svg class="a" style="left:269px;top:86.2px;" width="5.2" height="3.1" viewBox="0 0 5.2 3.1"><path d="M0,0 H5.2 L2.6,3.1 Z" fill="#444"/></svg>
<svg class="a" style="left:284px;top:78px;" width="38" height="15" viewBox="0 0 38 15">
<path d="M1.6,12.9 L5.6,3.2 L9.6,12.9 M3,9.5 H8.2" fill="none" stroke="#9f9f9f" stroke-width="1.1"/>
<path d="M9.6,4.4 L11.6,2.4 L13.6,4.4" fill="none" stroke="#9f9f9f" stroke-width="1"/>
<path d="M23.6,12.9 L27.3,5 L31,12.9 M25,10 H29.6" fill="none" stroke="#9f9f9f" stroke-width="1.1"/>
<path d="M31.4,2.4 L33.4,4.4 L35.4,2.4" fill="none" stroke="#9f9f9f" stroke-width="1"/>
</svg>
<div class="a t" style="left:129.38px;top:112.00px;font-family:'Liberation Sans';font-size:13px;font-weight:700;color:#8e8e8e;transform:scaleX(1.2250);">N</div>
<div class="a t" style="left:153.45px;top:111.00px;font-family:'Liberation Serif';font-size:14.5px;font-weight:400;color:#9f9f9f;transform:scaleX(1.5500);font-style:italic;">I</div>
<div class="a t" style="left:175.11px;top:113.00px;font-family:'Liberation Sans';font-size:12.2px;font-weight:400;color:#9f9f9f;transform:scaleX(1.0857);">S</div>
<div class="a" style="left:176px;top:124px;width:8px;height:1px;background:#9f9f9f;"></div>
<svg class="a" style="left:194px;top:118px;" width="5" height="3" viewBox="0 0 5 3"><path d="M0,0 H5 L2.5,3 Z" fill="#b4b4b4"/></svg>
<div class="a" style="left:207px;top:109px;width:1px;height:21px;background:#c8c6c4;"></div>
<svg class="a" style="left:214px;top:110px;" width="17" height="17" viewBox="0 0 17 17">
<rect x="1.5" y="1.5" width="14" height="14" fill="none" stroke="#b8b8b8" stroke-width="1" stroke-dasharray="1.6,1.2"/>
<path d="M8.5,1.5 V15.5 M1.5,8.5 H15.5" stroke="#c0c0c0" stroke-width="1" stroke-dasharray="1.6,1.2"/>
<path d="M1,15.6 H16" stroke="#9f9f9f" stroke-width="1.2"/>
</svg>
<svg class="a" style="left:237px;top:118px;" width="5" height="3" viewBox="0 0 5 3"><path d="M0,0 H5 L2.5,3 Z" fill="#b4b4b4"/></svg>
<div class="a" style="left:250px;top:109px;width:1px;height:21px;background:#c8c6c4;"></div>
<svg class="a" style="left:257px;top:110px;" width="18" height="18" viewBox="0 0 18 18">
<path d="M5.6,7.5 L9.6,2.6 L14.4,6.8 L10.4,11.6 Z" fill="#f4f4f4" stroke="#9f9f9f" stroke-width="1.1"/>
<path d="M9.6,2.6 C11,0.5 13.2,0.8 12.8,3.5 M14.2,4.5 C15.5,5.5 15.8,7.5 15.3,9" fill="none" stroke="#9f9f9f" stroke-width="1"/>
<rect x="1" y="12.9" width="16" height="4" fill="#b0acaa"/>
</svg>
<svg class="a" style="left:280px;top:118px;" width="5" height="3" viewBox="0 0 5 3"><path d="M0,0 H5 L2.5,3 Z" fill="#b4b4b4"/></svg>
<svg class="a" style="left:291px;top:110px;" width="18" height="18" viewBox="0 0 18 18">
<path d="M4.5,11.5 L9,1 L13.5,11.5 M6.3,7.5 H11.7" fill="none" stroke="#9f9f9f" stroke-width="1.2"/>
<rect x="1" y="12.9" width="16" height="4" fill="#b0acaa"/>
</svg>
<svg class="a" style="left:314px;top:118px;" width="5" height="3" viewBox="0 0 5 3"><path d="M0,0 H5 L2.5,3 Z" fill="#b4b4b4"/></svg>
<div class="a t" style="left:199.43px;top:146.00px;font-family:'Liberation Sans';font-size:12.2px;font-weight:400;color:#444444;transform:scaleX(0.9667);">Fonte</div>
<svg class="a" style="left:318.5px;top:148.5px;" width="8" height="8" viewBox="0 0 8 8"><path d="M0.5,7.5 V0.5 H7.5 M3,3 L7,7 M7,4 V7 H4" fill="none" stroke="#b4b4b4" stroke-width="1"/></svg>
<svg class="a" style="left:342px;top:78px;" width="60" height="18" viewBox="0 0 60 18">
<rect x="1" y="1" width="14" height="1.1" fill="#9f9f9f"/><rect x="3" y="5" width="10" height="1.1" fill="#9f9f9f"/><rect x="1" y="9" width="14" height="1.1" fill="#9f9f9f"/>
<rect x="23" y="4" width="14" height="1.1" fill="#9f9f9f"/><rect x="25" y="8" width="10" height="1.1" fill="#9f9f9f"/><rect x="23" y="12" width="14" height="1.1" fill="#9f9f9f"/>
<rect x="45" y="8" width="14" height="1.1" fill="#9f9f9f"/><rect x="47" y="12" width="10" height="1.1" fill="#9f9f9f"/><rect x="45" y="16" width="14" height="1.1" fill="#9f9f9f"/>
</svg>
<svg class="a" style="left:342px;top:111px;" width="116" height="15" viewBox="0 0 116 15">
<rect x="1" y="1" width="14" height="1.1" fill="#9f9f9f"/><rect x="1" y="5" width="10" height="1.1" fill="#9f9f9f"/><rect x="1" y="9" width="14" height="1.1" fill="#9f9f9f"/><rect x="1" y="13" width="10" height="1.1" fill="#9f9f9f"/>
<rect x="23" y="1" width="14" height="1.1" fill="#9f9f9f"/><rect x="25" y="5" width="10" height="1.1" fill="#9f9f9f"/><rect x="23" y="9" width="14" height="1.1" fill="#9f9f9f"/><rect x="25" y="13" width="10" height="1.1" fill="#9f9f9f"/>
<rect x="45" y="1" width="14" height="1.1" fill="#9f9f9f"/><rect x="49" y="5" width="10" height="1.1" fill="#9f9f9f"/><rect x="45" y="9" width="14" height="1.1" fill="#9f9f9f"/><rect x="49" y="13" width="10" height="1.1" fill="#9f9f9f"/>
<rect x="76" y="1" width="14" height="1.1" fill="#9f9f9f"/><rect x="84" y="5" width="6" height="1.1" fill="#9f9f9f"/><rect x="84" y="9" width="6" height="1.1" fill="#9f9f9f"/><rect x="76" y="13" width="14" height="1.1" fill="#9f9f9f"/>
<path d="M82,7.5 H76.5 M78.8,5.2 L76.5,7.5 L78.8,9.8" fill="none" stroke="#b4b4b4" stroke-width="1"/>
<rect x="98" y="1" width="14" height="1.1" fill="#9f9f9f"/><rect x="106" y="5" width="6" height="1.1" fill="#9f9f9f"/><rect x="106" y="9" width="6" height="1.1" fill="#9f9f9f"/><rect x="98" y="13" width="14" height="1.1" fill="#9f9f9f"/>
<path d="M98.5,7.5 H104 M101.7,5.2 L104,7.5 L101.7,9.8" fill="none" stroke="#b4b4b4" stroke-width="1"/>
</svg>
<div class="a" style="left:409px;top:77px;width:1px;height:21px;background:#c8c6c4;"></div>
<div class="a" style="left:409px;top:109px;width:1px;height:21px;background:#c8c6c4;"></div>
<svg class="a" style="left:415px;top:77px;" width="20" height="19" viewBox="0 0 20 19">
<text x="0" y="0" transform="translate(3.6,14.6) rotate(-45)" font-family="Liberation Sans" font-size="10.5" fill="#9f9f9f">ab</text>
<path d="M6.6,17.6 L17.6,6.6 M13.2,6.4 H17.8 V11" fill="none" stroke="#9f9f9f" stroke-width="1"/>
</svg>
<svg class="a" style="left:437px;top:86.2px;" width="5" height="3" viewBox="0 0 5 3"><path d="M0,0 H5 L2.5,3 Z" fill="#b4b4b4"/></svg>
<svg class="a" style="left:471px;top:77px;" width="17" height="19" viewBox="0 0 17 19">
<text x="1" y="8.6" font-family="Liberation Sans" font-size="9.6" fill="#9f9f9f">ab</text>
<text x="0.6" y="17" font-family="Liberation Sans" font-size="9.6" fill="#9f9f9f">c</text>
<path d="M7.5,13.6 H12.5 C15.6,13.6 15.6,9 12.5,9 M9.7,11.3 L7.4,13.6 L9.7,15.9" fill="none" stroke="#9f9f9f" stroke-width="1"/>
</svg>
<div class="a t" style="left:488.71px;top:82.00px;font-family:'Liberation Sans';font-size:12.2px;font-weight:400;color:#a6a6a6;transform:scaleX(0.9942);">Quebrar Texto Automaticamente</div>
<svg class="a" style="left:469px;top:110px;" width="17" height="17" viewBox="0 0 17 17">
<rect x="1.5" y="1.5" width="14" height="14" fill="#ededed" stroke="#9f9f9f" stroke-width="1.1"/>
<path d="M1.5,4.5 H15.5 M1.5,12.5 H15.5 M8.5,1.5 V4.5 M8.5,12.5 V15.5" stroke="#9f9f9f" stroke-width="1"/>
<path d="M3.6,8.5 H13.4 M5.6,6.6 L3.6,8.5 L5.6,10.4 M11.4,6.6 L13.4,8.5 L11.4,10.4" fill="none" stroke="#9f9f9f" stroke-width="1"/>
</svg>
<div class="a t" style="left:488.75px;top:114.00px;font-family:'Liberation Sans';font-size:12.2px;font-weight:400;color:#a6a6a6;transform:scaleX(0.9474);">Mesclar e Centralizar</div>
<svg class="a" style="left:608px;top:118.5px;" width="5" height="3" viewBox="0 0 5 3"><path d="M0,0 H5 L2.5,3 Z" fill="#b4b4b4"/></svg>
<div class="a" style="left:462px;top:74px;width:1px;height:59px;background:#c8c6c4;"></div>
<div class="a t" style="left:462.00px;top:146.00px;font-family:'Liberation Sans';font-size:12.2px;font-weight:400;color:#444444;transform:scaleX(0.9746);">Alinhamento</div>
<svg class="a" style="left:664.5px;top:148.5px;" width="8" height="8" viewBox="0 0 8 8"><path d="M0.5,7.5 V0.5 H7.5 M3,3 L7,7 M7,4 V7 H4" fill="none" stroke="#b4b4b4" stroke-width="1"/></svg>
<div class="a" style="left:685px;top:76px;width:131px;height:23px;background:#fff;box-shadow:inset 0 0 0 1px #c6c6c6;"></div>
<svg class="a" style="left:806px;top:86.3px;" width="5" height="2.6" viewBox="0 0 5 2.6"><path d="M0,0 H5 L2.5,2.6 Z" fill="#b4b4b4"/></svg>
<svg class="a" style="left:686px;top:112px;" width="20" height="16" viewBox="0 0 20 16">
<rect x="2.5" y="2.5" width="14" height="8.5" fill="#f0f0f0" stroke="#9f9f9f" stroke-width="1.1"/>
<text x="4" y="9.5" font-family="Liberation Sans" font-size="6.5" fill="#9f9f9f">cr</text>
<ellipse cx="13" cy="9.5" rx="3.5" ry="1.5" fill="#f0f0f0" stroke="#9f9f9f" stroke-width="1"/>
<path d="M9.5,9.5 V13.6 C9.5,15.2 16.5,15.2 16.5,13.6 V9.5" fill="#f0f0f0" stroke="#9f9f9f" stroke-width="1"/>
</svg>
<svg class="a" style="left:710px;top:117.8px;" width="5.4" height="3.2" viewBox="0 0 5.4 3.2"><path d="M0,0 H5.4 L2.7,3.2 Z" fill="#444"/></svg>
<div class="a t" style="left:721.68px;top:110.00px;font-family:'Liberation Sans';font-size:19.5px;font-weight:400;color:#9f9f9f;transform:scaleX(0.9187);">%</div>
<div class="a t" style="left:743.90px;top:115.00px;font-family:'Liberation Sans';font-size:9.2px;font-weight:400;color:#9f9f9f;transform:scaleX(1.0467);">000</div>
<div class="a" style="left:767px;top:109px;width:1px;height:21px;background:#c8c6c4;"></div>
<svg class="a" style="left:773px;top:110px;" width="42" height="18" viewBox="0 0 42 18">
<text x="9.6" y="8.4" font-family="Liberation Sans" font-size="9.6" fill="#9f9f9f">0</text>
<text x="1.4" y="16.6" font-family="Liberation Sans" font-size="9.6" fill="#9f9f9f">,00</text>
<path d="M9.2,4.8 H2.6 M5,2.4 L2.6,4.8 L5,7.2" fill="none" stroke="#9f9f9f" stroke-width="1"/>
<text x="24" y="8.4" font-family="Liberation Sans" font-size="9.6" fill="#9f9f9f">,00</text>
<text x="33" y="16.6" font-family="Liberation Sans" font-size="9.6" fill="#9f9f9f">0</text>
<path d="M24.4,12.6 H31.6 M29.2,10.2 L31.6,12.6 L29.2,15" fill="none" stroke="#9f9f9f" stroke-width="1"/>
</svg>
<div class="a t" style="left:720.43px;top:146.00px;font-family:'Liberation Sans';font-size:12.2px;font-weight:400;color:#444444;transform:scaleX(0.9667);">Número</div>
<svg class="a" style="left:811.5px;top:148.5px;" width="8" height="8" viewBox="0 0 8 8"><path d="M0.5,7.5 V0.5 H7.5 M3,3 L7,7 M7,4 V7 H4" fill="none" stroke="#b4b4b4" stroke-width="1"/></svg>
<svg class="a" style="left:855px;top:74px;" width="30" height="24" viewBox="0 0 30 24">
<rect x="1.5" y="1.5" width="27" height="21" fill="#ececec" stroke="#8f8f8f" stroke-width="1.1"/>
<rect x="7" y="2" width="11" height="6" fill="#cdcdcd"/><rect x="7" y="9" width="7.5" height="6" fill="#cdcdcd"/><rect x="7" y="16" width="13.5" height="6" fill="#cdcdcd"/>
<path d="M6.5,1.5 V22.5 M23.5,1.5 V22.5 M1.5,8.5 H28.5 M1.5,15.5 H28.5 M18,1.5 V8.5 M14.5,8.5 V15.5 M20.5,15.5 V22.5" stroke="#8f8f8f" stroke-width="1.1"/>
</svg>
<div class="a t" style="left:838.73px;top:107.00px;font-family:'Liberation Sans';font-size:12.2px;font-weight:400;color:#a6a6a6;transform:scaleX(0.9688);">Formatação</div>
<div class="a t" style="left:833.59px;top:123.00px;font-family:'Liberation Sans';font-size:12.2px;font-weight:400;color:#a6a6a6;transform:scaleX(1.0113);">Condicional</div>
<svg class="a" style="left:901.3px;top:128px;" width="4.8" height="2.8" viewBox="0 0 4.8 2.8"><path d="M0,0 H4.8 L2.4,2.8 Z" fill="#b4b4b4"/></svg>
<svg class="a" style="left:936px;top:74px;" width="34" height="30" viewBox="0 0 34 30">
<rect x="1.5" y="1.5" width="28" height="21" fill="#ececec" stroke="#8f8f8f" stroke-width="1.1"/>
<rect x="8" y="9" width="14" height="13" fill="#cdcdcd"/>
<path d="M8,1.5 V22.5 M22,1.5 V22.5 M1.5,8.5 H29.5 M1.5,15.5 H29.5" stroke="#8f8f8f" stroke-width="1.1"/>
<path d="M31.5,8.5 L18.5,20" stroke="#8f8f8f" stroke-width="4.2" stroke-linecap="round"/>
<path d="M31.5,8.5 L18.5,20" stroke="#f3f3f3" stroke-width="2" stroke-linecap="round"/>
<path d="M20.5,19.5 C19,17 15.5,18 14.5,21 C13.5,24 12,26 10.3,27.7 C14,27.5 18,26.5 20,23.5 C21,22 21.5,20.5 20.5,19.5 Z" fill="#c2c2c2" stroke="#8f8f8f" stroke-width="0.9"/>
</svg>
<div class="a t" style="left:910.20px;top:107.00px;font-family:'Liberation Sans';font-size:12.2px;font-weight:400;color:#a6a6a6;transform:scaleX(1.0049);">Formatar como</div>
<div class="a t" style="left:931.20px;top:123.00px;font-family:'Liberation Sans';font-size:12.2px;font-weight:400;color:#a6a6a6;transform:scaleX(0.9167);">Tabela</div>
<svg class="a" style="left:969px;top:128px;" width="4.8" height="2.8" viewBox="0 0 4.8 2.8"><path d="M0,0 H4.8 L2.4,2.8 Z" fill="#b4b4b4"/></svg>
<svg class="a" style="left:1008px;top:74px;" width="34" height="30" viewBox="0 0 34 30">
<rect x="1.5" y="1.5" width="27" height="21" fill="#ececec" stroke="#8f8f8f" stroke-width="1.1"/>
<rect x="6.5" y="6.5" width="16.5" height="11" fill="#cdcdcd"/>
<path d="M6.5,1.5 V22.5 M23,1.5 V17.5 M1.5,6.5 H28.5 M6.5,17.5 H23" stroke="#8f8f8f" stroke-width="1.1"/>
<path d="M30.5,8.5 L17.5,20" stroke="#8f8f8f" stroke-width="4.2" stroke-linecap="round"/>
<path d="M30.5,8.5 L17.5,20" stroke="#f3f3f3" stroke-width="2" stroke-linecap="round"/>
<path d="M19.5,19.5 C18,17 14.5,18 13.5,21 C12.5,24 11,26 9.3,27.7 C13,27.5 17,26.5 19,23.5 C20,22 20.5,20.5 19.5,19.5 Z" fill="#c2c2c2" stroke="#8f8f8f" stroke-width="0.9"/>
</svg>
<div class="a t" style="left:997.75px;top:107.00px;font-family:'Liberation Sans';font-size:12.2px;font-weight:400;color:#a6a6a6;transform:scaleX(0.9471);">Estilos de</div>
<div class="a t" style="left:1001.73px;top:123.00px;font-family:'Liberation Sans';font-size:12.2px;font-weight:400;color:#a6a6a6;transform:scaleX(0.9667);">Célula</div>
<svg class="a" style="left:1038.1px;top:128px;" width="4.8" height="2.8" viewBox="0 0 4.8 2.8"><path d="M0,0 H4.8 L2.4,2.8 Z" fill="#b4b4b4"/></svg>
<div class="a t" style="left:923.14px;top:146.00px;font-family:'Liberation Sans';font-size:12.2px;font-weight:400;color:#444444;transform:scaleX(0.9647);">Estilos</div>
<svg class="a" style="left:1068px;top:70px;" width="18" height="16" viewBox="0 0 18 16">
<rect x="7" y="5.5" width="9.5" height="5" fill="#d0d0d0"/>
<path d="M1.5,5.5 V1.5 H16.5 V14.5 H1.5 V10.5 M1.5,5.5 H16.5 M1.5,10.5 H16.5 M7,1.5 V5.5 M7,10.5 V14.5 M12,1.5 V14.5" fill="none" stroke="#9f9f9f" stroke-width="1.1"/>
<path d="M10.5,8 H2 M4.6,5.4 L2,8 L4.6,10.6" fill="none" stroke="#a0a0a0" stroke-width="1.2"/>
</svg>
<div class="a t" style="left:1087.55px;top:73.00px;font-family:'Liberation Sans';font-size:12.2px;font-weight:400;color:#a6a6a6;transform:scaleX(0.9485);">Inserir</div>
<svg class="a" style="left:1130px;top:76.9px;" width="5.1" height="3.1" viewBox="0 0 5.1 3.1"><path d="M0,0 H5.1 L2.55,3.1 Z" fill="#666666"/></svg>
<svg class="a" style="left:1068px;top:93px;" width="18" height="16" viewBox="0 0 18 16">
<rect x="6.5" y="5.5" width="5.5" height="5" fill="#d0d0d0"/>
<path d="M12,5.5 H16.5 V1.5 H1.5 V14.5 H16.5 V10.5 H12 M1.5,5.5 H12 M1.5,10.5 H12 M6.5,1.5 V14.5 M12,1.5 V5.5 M12,10.5 V14.5" fill="none" stroke="#9f9f9f" stroke-width="1.1"/>
<path d="M12.6,5.6 L16.8,10.2 M16.8,5.6 L12.6,10.2" stroke="#9f9f9f" stroke-width="1.1"/>
</svg>
<div class="a t" style="left:1087.86px;top:96.00px;font-family:'Liberation Sans';font-size:12.2px;font-weight:400;color:#a6a6a6;transform:scaleX(0.9429);">Excluir</div>
<svg class="a" style="left:1132px;top:100px;" width="5.1" height="3.1" viewBox="0 0 5.1 3.1"><path d="M0,0 H5.1 L2.55,3.1 Z" fill="#666666"/></svg>
<svg class="a" style="left:1068px;top:114px;" width="18" height="19" viewBox="0 0 18 19">
<rect x="1.5" y="3.5" width="15" height="14" fill="#fff" stroke="#333" stroke-width="1.1"/>
<path d="M6.5,3.5 V17.5 M11.5,3.5 V17.5 M1.5,8 H16.5 M1.5,13 H16.5" stroke="#333" stroke-width="1"/>
<rect x="5.5" y="8" width="7" height="5.5" fill="#8ec3f0" stroke="#1e7fd4" stroke-width="1.1"/>
<path d="M4.5,2 H13.5 M4.5,0.5 V3.5 M13.5,0.5 V3.5" stroke="#1e7fd4" stroke-width="1"/>
</svg>
<div class="a t" style="left:1087.82px;top:119.00px;font-family:'Liberation Sans';font-size:12.2px;font-weight:400;color:#262626;transform:scaleX(0.9833);">Formatar</div>
<svg class="a" style="left:1139.3px;top:123.4px;" width="4.8" height="2.9" viewBox="0 0 4.8 2.9"><path d="M0,0 H4.8 L2.4,2.9 Z" fill="#666666"/></svg>
<div class="a t" style="left:1088.37px;top:146.00px;font-family:'Liberation Sans';font-size:12.2px;font-weight:400;color:#444444;transform:scaleX(0.9308);">Células</div>
<svg class="a" style="left:1170px;top:70px;" width="16" height="16" viewBox="0 0 16 16"><path d="M13.5,2.2 H2.5 L8,8 L2.5,13.8 H13.8" fill="none" stroke="#9f9f9f" stroke-width="1.1"/></svg>
<svg class="a" style="left:1192px;top:76.6px;" width="5" height="3.5" viewBox="0 0 5 3.5"><path d="M0,0 H5 L2.5,3.5 Z" fill="#666666"/></svg>
<svg class="a" style="left:1169px;top:93px;" width="18" height="16" viewBox="0 0 18 16">
<rect x="1.5" y="1.5" width="15" height="13" fill="#fbfbfb" stroke="#333" stroke-width="1.1"/>
<path d="M1.5,3.6 H16.5" stroke="#333" stroke-width="1"/>
<path d="M8.5,5.6 V12.4 M5.8,9.8 L8.5,12.5 L11.2,9.8" fill="none" stroke="#1e8be0" stroke-width="1.2"/>
</svg>
<svg class="a" style="left:1190px;top:99.7px;" width="5" height="3.1" viewBox="0 0 5 3.1"><path d="M0,0 H5 L2.5,3.1 Z" fill="#666666"/></svg>
<svg class="a" style="left:1168px;top:114px;" width="20" height="20" viewBox="0 0 20 20">
<g transform="rotate(-45 10 10)">
<rect x="2.2" y="6.6" width="15.6" height="7" fill="#f6f6f6" stroke="#a33fb5" stroke-width="1.3"/>
<rect x="2.9" y="7.3" width="5.2" height="5.6" fill="#c87dd2"/>
<path d="M8.2,6.6 V13.6" stroke="#a33fb5" stroke-width="1"/>
</g>
</svg>
<svg class="a" style="left:1190px;top:122.7px;" width="5" height="3.3" viewBox="0 0 5 3.3"><path d="M0,0 H5 L2.5,3.3 Z" fill="#666666"/></svg>
<svg class="a" style="left:1214px;top:71px;" width="34" height="30" viewBox="0 0 34 30">
<path d="M3,13.6 L7.5,2.4 L12,13.6 M4.6,9.6 H10.4" fill="none" stroke="#1e8be0" stroke-width="1.5"/>
<path d="M3.6,16.6 H11.6 L3.6,27.4 H12" fill="none" stroke="#333" stroke-width="1.3"/>
<path d="M15.5,8.6 H30.6 L24.6,15.5 V23 H21.5 V15.5 Z" fill="#fbfbfb" stroke="#333" stroke-width="1.2"/>
</svg>
<div class="a t" style="left:1203.75px;top:107.00px;font-family:'Liberation Sans';font-size:12.2px;font-weight:400;color:#444444;transform:scaleX(0.9509);">Classificar</div>
<div class="a t" style="left:1206.85px;top:123.00px;font-family:'Liberation Sans';font-size:12.2px;font-weight:400;color:#444444;transform:scaleX(0.9525);">e Filtrar</div>
<svg class="a" style="left:1249.5px;top:127.3px;" width="4.5" height="2.8" viewBox="0 0 4.5 2.8"><path d="M0,0 H4.5 L2.25,2.8 Z" fill="#666666"/></svg>
<svg class="a" style="left:1276px;top:70px;" width="34" height="34" viewBox="0 0 34 34">
<circle cx="20.5" cy="12.3" r="10" fill="#fbfbfb" stroke="#333" stroke-width="1.2"/>
<path d="M13.4,19.4 L2.2,30.6" stroke="#333" stroke-width="1.2"/>
</svg>
<div class="a t" style="left:1265.66px;top:107.00px;font-family:'Liberation Sans';font-size:12.2px;font-weight:400;color:#444444;transform:scaleX(0.9448);">Localizar e</div>
<div class="a t" style="left:1261.45px;top:123.00px;font-family:'Liberation Sans';font-size:12.2px;font-weight:400;color:#444444;transform:scaleX(0.9536);">Selecionar</div>
<svg class="a" style="left:1319.1px;top:127.3px;" width="4.9" height="2.8" viewBox="0 0 4.9 2.8"><path d="M0,0 H4.9 L2.45,2.8 Z" fill="#666666"/></svg>
<div class="a t" style="left:1228.38px;top:146.00px;font-family:'Liberation Sans';font-size:12.2px;font-weight:400;color:#444444;transform:scaleX(0.9194);">Edição</div>
<svg class="a" style="left:1345px;top:147px;" width="12" height="9" viewBox="0 0 12 9"><path d="M1.6,6.6 L5.8,2.4 L10,6.6" fill="none" stroke="#444" stroke-width="1.2"/></svg>
<div class="a" style="left:5px;top:171px;width:102px;height:26px;background:#fff;box-shadow:inset 0 0 0 1px #c6c6c6;"></div>
<div class="a t" style="left:11.57px;top:179.00px;font-family:'Liberation Sans';font-size:12.2px;font-weight:400;color:#262626;transform:scaleX(0.9286);">E6</div>
<svg class="a" style="left:93px;top:181px;" width="7" height="4" viewBox="0 0 7 4"><path d="M0,0 H7 L3.5,4 Z" fill="#777"/></svg>
<div class="a" style="left:121px;top:179px;width:2px;height:2px;background:#9a9a9a;"></div>
<div class="a" style="left:121px;top:183.5px;width:2px;height:2px;background:#9a9a9a;"></div>
<div class="a" style="left:121px;top:188px;width:2px;height:2px;background:#9a9a9a;"></div>
<div class="a" style="left:137px;top:171px;width:110px;height:26px;background:#fff;box-shadow:inset 0 0 0 1px #c6c6c6;"></div>
<svg class="a" style="left:149px;top:178px;" width="14" height="12" viewBox="0 0 14 12"><path d="M2,1.6 L12,10.8 M12,1.6 L2,10.8" stroke="#a8a8a8" stroke-width="1.2"/></svg>
<svg class="a" style="left:185px;top:178px;" width="16" height="13" viewBox="0 0 16 13"><path d="M1.5,7.5 L5.5,11.5 L14.5,1.5" fill="none" stroke="#c8c8c8" stroke-width="1.8"/></svg>
<div class="a t" style="left:222.00px;top:178.00px;font-family:'Liberation Serif';font-size:12.5px;font-weight:700;color:#404040;transform:scaleX(1.1000);font-style:italic;">f</div>
<div class="a t" style="left:227.60px;top:180.00px;font-family:'Liberation Serif';font-size:10px;font-weight:700;color:#404040;transform:scaleX(1.3000);font-style:italic;">x</div>
<div class="a" style="left:250px;top:171px;width:1111px;height:26px;background:#fff;box-shadow:inset 0 0 0 1px #c6c6c6;"></div>
<div class="a t" style="left:261.45px;top:179.00px;font-family:'Liberation Sans';font-size:12.2px;font-weight:400;color:#262626;transform:scaleX(1.0526);">100</div>
<svg class="a" style="left:1347px;top:179px;" width="10" height="7" viewBox="0 0 10 7"><path d="M1.5,1.5 L5,5 L8.5,1.5" fill="none" stroke="#555" stroke-width="1.3"/></svg>
<div class="a" style="left:1348px;top:224px;width:15px;height:478px;background:#dadada;"></div>
<div class="a" style="left:1348px;top:209px;width:15px;height:14px;background:#fff;box-shadow:inset 0 0 0 1px #c6c6c6;"></div>
<svg class="a" style="left:1352px;top:213.5px;" width="7" height="5" viewBox="0 0 7 5"><path d="M0,4.5 H7 L3.5,0.5 Z" fill="#777"/></svg>
<div class="a" style="left:1348px;top:224px;width:15px;height:42px;background:#fff;box-shadow:inset 0 0 0 1px #c6c6c6;"></div>
<div class="a" style="left:1348px;top:702px;width:15px;height:15px;background:#fff;box-shadow:inset 0 0 0 1px #c6c6c6;"></div>
<svg class="a" style="left:1352px;top:708px;" width="7" height="4" viewBox="0 0 7 4"><path d="M0,0 H7 L3.5,4 Z" fill="#777"/></svg>
<div class="a" style="left:941px;top:724px;width:403px;height:15px;background:#dadada;"></div>
<div class="a" style="left:941px;top:724px;width:15px;height:15px;background:#fff;box-shadow:inset 0 0 0 1px #9c9c9c;"></div>
<svg class="a" style="left:945px;top:727.5px;" width="6" height="8" viewBox="0 0 6 8"><path d="M5.5,0 V8 L0.8,4 Z" fill="#6e6e6e"/></svg>
<div class="a" style="left:956px;top:724px;width:124px;height:15px;background:#fff;box-shadow:inset 0 0 0 1px #9c9c9c;"></div>
<div class="a" style="left:1330px;top:724px;width:15px;height:15px;background:#fff;box-shadow:inset 0 0 0 1px #c6c6c6;"></div>
<svg class="a" style="left:1334px;top:727.5px;" width="6" height="8" viewBox="0 0 6 8"><path d="M0.5,0 V8 L5.2,4 Z" fill="#6e6e6e"/></svg>
<div class="a" style="left:924px;top:726px;width:2px;height:2px;background:#9a9a9a;"></div>
<div class="a" style="left:924px;top:730px;width:2px;height:2px;background:#9a9a9a;"></div>
<div class="a" style="left:924px;top:734px;width:2px;height:2px;background:#9a9a9a;"></div>
<svg class="a" style="left:26px;top:726px;" width="6" height="8" viewBox="0 0 6 8"><path d="M5,0.5 V7.5 L1,4 Z" fill="#c0c0c0"/></svg>
<svg class="a" style="left:55px;top:726px;" width="6" height="8" viewBox="0 0 6 8"><path d="M1,0.5 V7.5 L5,4 Z" fill="#c0c0c0"/></svg>
<div class="a" style="left:100px;top:721px;width:1px;height:20px;background:#9a9a9a;"></div>
<div class="a" style="left:148px;top:721px;width:1px;height:20px;background:#9a9a9a;"></div>
<div class="a" style="left:285px;top:721px;width:1px;height:20px;background:#9a9a9a;"></div>
<div class="a" style="left:331px;top:721px;width:1px;height:20px;background:#9a9a9a;"></div>
<div class="a" style="left:376px;top:721px;width:1px;height:20px;background:#9a9a9a;"></div>
<div class="a" style="left:423px;top:721px;width:1px;height:20px;background:#9a9a9a;"></div>
<div class="a" style="left:469px;top:721px;width:1px;height:20px;background:#9a9a9a;"></div>
<div class="a" style="left:519px;top:721px;width:1px;height:20px;background:#9a9a9a;"></div>
<div class="a" style="left:568px;top:721px;width:1px;height:20px;background:#9a9a9a;"></div>
<div class="a" style="left:610px;top:721px;width:1px;height:20px;background:#9a9a9a;"></div>
<div class="a" style="left:661px;top:721px;width:1px;height:20px;background:#9a9a9a;"></div>
<div class="a" style="left:710px;top:721px;width:1px;height:20px;background:#9a9a9a;"></div>
<div class="a" style="left:757px;top:721px;width:1px;height:20px;background:#9a9a9a;"></div>
<div class="a" style="left:196px;top:717px;width:46px;height:24px;background:#fff;"></div>
<div class="a" style="left:196px;top:740px;width:46px;height:2px;background:#217346;"></div>
<div class="a t" style="left:111.71px;top:725.00px;font-family:'Liberation Sans';font-size:12.4px;font-weight:400;color:#444;transform:scaleX(1.0405);">Con</div>
<div class="a t" style="left:159.55px;top:725.00px;font-family:'Liberation Sans';font-size:12.4px;font-weight:400;color:#444;transform:scaleX(1.0548);">Cad</div>
<div class="a t" style="left:251.54px;top:725.00px;font-family:'Liberation Sans';font-size:12.4px;font-weight:400;color:#444;transform:scaleX(1.0556);">Pre</div>
<div class="a t" style="left:296.22px;top:725.00px;font-family:'Liberation Sans';font-size:12.4px;font-weight:400;color:#444;transform:scaleX(0.9762);">Rve</div>
<div class="a t" style="left:341.88px;top:725.00px;font-family:'Liberation Sans';font-size:12.4px;font-weight:400;color:#444;transform:scaleX(1.1167);">Rre</div>
<div class="a t" style="left:386.35px;top:725.00px;font-family:'Liberation Sans';font-size:12.4px;font-weight:400;color:#444;transform:scaleX(0.9458);">RPR</div>
<div class="a t" style="left:435.25px;top:725.00px;font-family:'Liberation Sans';font-size:12.4px;font-weight:400;color:#444;">RDI</div>
<div class="a t" style="left:481.52px;top:725.00px;font-family:'Liberation Sans';font-size:12.4px;font-weight:400;color:#444;transform:scaleX(0.9792);">DPR</div>
<div class="a t" style="left:531.18px;top:725.00px;font-family:'Liberation Sans';font-size:12.4px;font-weight:400;color:#444;transform:scaleX(1.0658);">DDI</div>
<div class="a t" style="left:578.83px;top:725.00px;font-family:'Liberation Sans';font-size:12.4px;font-weight:400;color:#444;transform:scaleX(1.1714);">INI</div>
<div class="a t" style="left:620.94px;top:725.00px;font-family:'Liberation Sans';font-size:12.4px;font-weight:400;color:#444;transform:scaleX(1.0560);">DUV</div>
<div class="a t" style="left:671.90px;top:725.00px;font-family:'Liberation Sans';font-size:12.4px;font-weight:400;color:#444;transform:scaleX(0.9960);">SUG</div>
<div class="a t" style="left:721.67px;top:725.00px;font-family:'Liberation Sans';font-size:12.4px;font-weight:400;color:#444;transform:scaleX(1.0318);">LUZ</div>
<div class="a t" style="left:206.48px;top:725.00px;font-family:'Liberation Sans';font-size:12.4px;font-weight:700;color:#217346;transform:scaleX(1.0238);">Pve</div>
<svg class="a" style="left:790px;top:722px;" width="18" height="18" viewBox="0 0 18 18"><circle cx="8.9" cy="8.9" r="7.3" fill="none" stroke="#666" stroke-width="1.2"/><path d="M8.9,4.9 V12.9 M4.9,8.9 H12.9" stroke="#666" stroke-width="1.4"/></svg>
<svg class="a" style="left:7px;top:748px;" width="16" height="16" viewBox="0 0 16 16">
<circle cx="4.5" cy="4" r="3" fill="#666"/>
<path d="M8,2.5 H14 V13.6 H2.5 V8" fill="none" stroke="#666" stroke-width="1.2"/>
<rect x="8" y="2.2" width="6" height="2.4" fill="#666"/>
<path d="M5,7.2 H6.6 M8,7.2 H9.6 M11,7.2 H12.6 M5,9.4 H6.6 M8,9.4 H9.6 M11,9.4 H12.6 M5,11.6 H6.6 M8,11.6 H9.6 M11,11.6 H12.6" stroke="#666" stroke-width="1"/>
</svg>
<div class="a" style="left:1086px;top:746px;width:38px;height:20px;background:#c8c6c4;"></div>
<svg class="a" style="left:1097px;top:748px;" width="16" height="15" viewBox="0 0 16 15"><rect x="1.4" y="1.4" width="12" height="12" fill="none" stroke="#666" stroke-width="1.2"/><path d="M5.4,1.4 V13.4 M9.4,1.4 V13.4 M1.4,5.4 H13.4 M1.4,9.4 H13.4" stroke="#666" stroke-width="1.2"/></svg>
<svg class="a" style="left:1135px;top:748px;" width="17" height="15" viewBox="0 0 17 15"><rect x="1.5" y="1.5" width="13" height="12" fill="none" stroke="#666" stroke-width="1.2"/><rect x="4" y="4" width="8" height="7" fill="none" stroke="#666" stroke-width="1"/><path d="M5.5,6 H10.5 M5.5,7.6 H10.5 M5.5,9.2 H10.5" stroke="#666" stroke-width="0.9"/></svg>
<svg class="a" style="left:1173px;top:748px;" width="17" height="15" viewBox="0 0 17 15"><rect x="1.5" y="1.5" width="13" height="12" fill="none" stroke="#666" stroke-width="1.2"/><path d="M1.5,8.5 H9.5 V1.5 M5.5,1.5 V8.5" fill="none" stroke="#666" stroke-width="1.1"/></svg>
<div class="a" style="left:1204px;top:755px;width:7px;height:2px;background:#444;"></div>
<div class="a" style="left:1215px;top:756px;width:100px;height:1px;background:#9a9a9a;"></div>
<div class="a" style="left:1258px;top:750px;width:5px;height:11px;background:#6e6e6e;"></div>
<div class="a" style="left:1265px;top:751px;width:1px;height:9px;background:#9a9a9a;"></div>
<svg class="a" style="left:1317px;top:751px;" width="10" height="10" viewBox="0 0 10 10"><path d="M4.6,1 V9 M0.8,5 H8.6" stroke="#444" stroke-width="1.7"/></svg>
<div class="a t" style="left:1336.09px;top:749.00px;font-family:'Liberation Sans';font-size:12.2px;font-weight:400;color:#444;transform:scaleX(0.9130);">90%</div>
<div class="a" style="left:0px;top:765px;width:1366px;height:1px;background:#fbfbfb;"></div>
<div class="a" style="left:1086px;top:765px;width:38px;height:1px;background:#c8c6c4;"></div>
<div class="a" style="left:48px;top:765px;width:344px;height:1px;background:#f3f2f1;"></div>
<div class="a" style="left:48px;top:766px;width:344px;height:1px;background:#c4c4c4;"></div>
<div class="a" style="left:48px;top:767px;width:344px;height:1px;background:#f1f1f1;"></div>
<div class="a" style="left:688px;top:766px;width:49px;height:2px;background:#5a5a5a;"></div>
</body></html>
